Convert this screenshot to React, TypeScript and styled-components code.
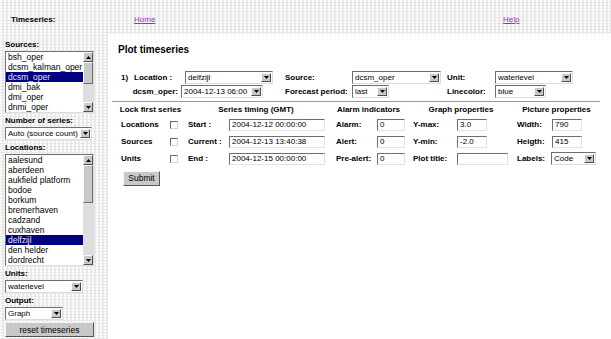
import React from 'react';
import styled, { createGlobalStyle } from 'styled-components';

const GlobalStyle = createGlobalStyle`
  html, body {
    margin: 0;
    padding: 0;
  }
  body {
    width: 611px;
    height: 339px;
    overflow: hidden;
    background-color: #e9e9e9;
    background-image: radial-gradient(circle at 1px 1px, #ffffff 0.7px, transparent 1px);
    background-size: 4px 3px;
    font-family: "Liberation Sans", Arial, sans-serif;
    color: #000;
  }
`;

const Page = styled.div`
  display: grid;
  grid-template-columns: 108px 503px;
  grid-template-rows: 34px 305px;
`;

const Header = styled.div`
  grid-column: 1 / -1;
  display: grid;
  grid-template-columns: 134px 369px auto;
  align-items: center;
  padding-top: 4px;
  font-size: 8px;
`;

const AppTitle = styled.div`
  padding-left: 11px;
  font-weight: bold;
`;

const NavLink = styled.a`
  color: #9933cc;
  text-decoration: underline;
  width: fit-content;
`;

const Sidebar = styled.div`
  display: flex;
  flex-direction: column;
  align-items: flex-start;
  padding: 6px 0 0 5px;
`;

const SideLabel = styled.div`
  font-size: 8px;
  font-weight: bold;
  line-height: 10px;
  height: 10px;
  margin-bottom: 1px;
`;

const SideField = styled.div`
  margin-bottom: 3px;
`;

const ListBox = styled.div<{ $rows: number }>`
  box-sizing: border-box;
  display: flex;
  width: 89px;
  height: ${p => p.$rows * 10 + 2}px;
  background: #fff;
  border: 1px solid;
  border-color: #6e6e6e #dcdcdc #dcdcdc #6e6e6e;
`;

const ListItems = styled.div`
  flex: 1;
  min-width: 0;
`;

const ListItem = styled.div<{ $selected?: boolean }>`
  height: 10px;
  line-height: 10px;
  font-size: 8.5px;
  padding-left: 2px;
  white-space: nowrap;
  overflow: hidden;
  background: ${p => (p.$selected ? '#000080' : 'transparent')};
  color: ${p => (p.$selected ? '#e4e4f4' : '#000')};
`;

const Scrollbar = styled.div`
  width: 10px;
  display: flex;
  flex-direction: column;
  background: #dedede;
`;

const ScrollButton = styled.div`
  box-sizing: border-box;
  width: 10px;
  height: 10px;
  background: #c8c8c8;
  border: 1px solid;
  border-color: #fafafa #505050 #505050 #fafafa;
  display: flex;
  align-items: center;
  justify-content: center;
`;

const ScrollThumb = styled.div<{ $h: number }>`
  box-sizing: border-box;
  height: ${p => p.$h}px;
  background: #c8c8c8;
  border: 1px solid;
  border-color: #fafafa #707070 #707070 #fafafa;
`;

const ScrollSpace = styled.div`
  flex: 1;
`;

const SelectBox = styled.div<{ $w: number }>`
  box-sizing: border-box;
  width: ${p => p.$w}px;
  height: 13px;
  flex: none;
  display: flex;
  align-items: center;
  padding: 0 1px 0 2px;
  background: #fff;
  border: 1px solid;
  border-color: #6e6e6e #dcdcdc #dcdcdc #6e6e6e;
  font-size: 8px;
  font-weight: normal;
`;

const SelectText = styled.span`
  flex: 1;
  min-width: 0;
  white-space: nowrap;
  overflow: hidden;
  line-height: 11px;
`;

const ArrowButton = styled.span`
  box-sizing: border-box;
  width: 10px;
  height: 9px;
  flex: none;
  display: flex;
  align-items: center;
  justify-content: center;
  background: #c8c8c8;
  border: 1px solid;
  border-color: #fafafa #505050 #505050 #fafafa;
`;

const Main = styled.div`
  background: #fff;
  padding: 10px 0 0 9px;
`;

const PageTitle = styled.div`
  font-size: 10px;
  font-weight: bold;
  line-height: 12px;
  padding-left: 1px;
  margin-bottom: 14px;
`;

const SeriesRow = styled.div`
  display: flex;
  align-items: center;
  height: 14px;
`;

const Cell = styled.div<{ $w: number; $pl?: number; $right?: boolean }>`
  box-sizing: border-box;
  width: ${p => p.$w}px;
  flex: none;
  padding-left: ${p => p.$pl ?? 0}px;
  padding-right: ${p => (p.$right ? 3 : 0)}px;
  text-align: ${p => (p.$right ? 'right' : 'left')};
  font-size: 8px;
  font-weight: bold;
  white-space: nowrap;
`;

const Rule = styled.div`
  margin: 3px 0 0 -5px;
  width: 488px;
  border-top: 1px solid #9a9a9a;
`;

const PropsGrid = styled.div`
  display: grid;
  grid-template-columns: 51px 16px 44px 100px 48px 33px 47px 57px 38px 49px;
  grid-template-rows: 14px;
  grid-auto-rows: 17px;
  align-items: center;
  font-size: 8px;
`;

const GroupHead = styled.div`
  grid-column: span 2;
  text-align: center;
  font-weight: bold;
  white-space: nowrap;
`;

const PropLabel = styled.div<{ $pl?: number }>`
  padding-left: ${p => p.$pl ?? 4}px;
  font-weight: bold;
  white-space: nowrap;
`;

const TextField = styled.input.attrs({ readOnly: true, type: 'text' })<{ $w: number }>`
  box-sizing: border-box;
  width: ${p => p.$w}px;
  height: 12px;
  margin: 0 0 0 1px;
  padding: 0 0 0 2px;
  background: #fff;
  border: 1px solid;
  border-color: #6e6e6e #e2e2e2 #e2e2e2 #6e6e6e;
  font-family: "Liberation Sans", Arial, sans-serif;
  font-size: 8px;
  line-height: 10px;
  color: #000;
  outline: none;
`;

const CheckBox = styled.span`
  box-sizing: border-box;
  display: block;
  width: 8px;
  height: 8px;
  margin-left: 2px;
  background: #fff;
  border: 1px solid;
  border-color: #6a6a6a #d4d4d4 #d4d4d4 #6a6a6a;
`;

const GrayButton = styled.button<{ $w: number }>`
  box-sizing: border-box;
  width: ${p => p.$w}px;
  height: 15px;
  padding: 0;
  background: #c8c8c8;
  border: 1px solid;
  border-color: #f6f6f6 #555 #555 #f6f6f6;
  font-family: "Liberation Sans", Arial, sans-serif;
  font-size: 8.5px;
  color: #000;
`;

const SubmitButton = styled(GrayButton)`
  margin: 2px 0 0 6px;
`;

const ResetButton = styled(GrayButton)`
  margin-top: 2px;
`;

const DownTriangle = () => (
  <svg width="5" height="3" viewBox="0 0 5 3">
    <path d="M0 0h5L2.5 3z" fill="#000" />
  </svg>
);

const UpTriangle = () => (
  <svg width="5" height="3" viewBox="0 0 5 3">
    <path d="M0 3h5L2.5 0z" fill="#000" />
  </svg>
);

const Select = ({ w, value }: { w: number; value: string }) => (
  <SelectBox $w={w}>
    <SelectText>{value}</SelectText>
    <ArrowButton>
      <DownTriangle />
    </ArrowButton>
  </SelectBox>
);

const List = ({ items, selected, thumb }: { items: string[]; selected: string; thumb: number }) => (
  <ListBox $rows={items.length}>
    <ListItems>
      {items.map(item => (
        <ListItem key={item} $selected={item === selected}>
          {item}
        </ListItem>
      ))}
    </ListItems>
    <Scrollbar>
      <ScrollButton>
        <UpTriangle />
      </ScrollButton>
      <ScrollThumb $h={thumb} />
      <ScrollSpace />
      <ScrollButton>
        <DownTriangle />
      </ScrollButton>
    </Scrollbar>
  </ListBox>
);

const sources = ['bsh_oper', 'dcsm_kalman_oper', 'dcsm_oper', 'dmi_bak', 'dmi_oper', 'dnmi_oper'];

const locations = [
  'aalesund',
  'aberdeen',
  'aukfield platform',
  'bodoe',
  'borkum',
  'bremerhaven',
  'cadzand',
  'cuxhaven',
  'delfzijl',
  'den helder',
  'dordrecht',
];

const App: React.FC = () => {
  return (
    <>
      <GlobalStyle />
      <Page>
        <Header>
          <AppTitle>Timeseries:</AppTitle>
          <NavLink href="#">Home</NavLink>
          <NavLink href="#">Help</NavLink>
        </Header>

        <Sidebar>
          <SideLabel>Sources:</SideLabel>
          <SideField>
            <List items={sources} selected="dcsm_oper" thumb={22} />
          </SideField>
          <SideLabel>Number of series:</SideLabel>
          <SideField>
            <Select w={87} value="Auto (source count)" />
          </SideField>
          <SideLabel>Locations:</SideLabel>
          <SideField>
            <List items={locations} selected="delfzijl" thumb={38} />
          </SideField>
          <SideLabel>Units:</SideLabel>
          <SideField>
            <Select w={78} value="waterlevel" />
          </SideField>
          <SideLabel>Output:</SideLabel>
          <Select w={58} value="Graph" />
          <ResetButton $w={89}>reset timeseries</ResetButton>
        </Sidebar>

        <Main>
          <PageTitle>Plot timeseries</PageTitle>

          <SeriesRow>
            <Cell $w={17} $pl={4}>1)</Cell>
            <Cell $w={51}>Location :</Cell>
            <Select w={88} value="delfzijl" />
            <Cell $w={79} $pl={12}>Source:</Cell>
            <Select w={89} value="dcsm_oper" />
            <Cell $w={54} $pl={6}>Unit:</Cell>
            <Select w={78} value="waterlevel" />
          </SeriesRow>
          <SeriesRow>
            <Cell $w={64} $right>dcsm_oper:</Cell>
            <Select w={82} value="2004-12-13 06:00" />
            <Cell $w={89} $pl={22}>Forecast period:</Cell>
            <Select w={37} value="last" />
            <Cell $w={106} $pl={58}>Linecolor:</Cell>
            <Select w={51} value="blue" />
          </SeriesRow>

          <Rule />

          <PropsGrid>
            <GroupHead>Lock first series</GroupHead>
            <GroupHead>Series timing (GMT)</GroupHead>
            <GroupHead>Alarm indicators</GroupHead>
            <GroupHead>Graph properties</GroupHead>
            <GroupHead>Picture properties</GroupHead>

            <PropLabel>Locations</PropLabel>
            <CheckBox />
            <PropLabel>Start :</PropLabel>
            <TextField $w={96} value="2004-12-12 00:00:00" />
            <PropLabel $pl={8}>Alarm:</PropLabel>
            <TextField $w={28} value="0" />
            <PropLabel>Y-max:</PropLabel>
            <TextField $w={30} value="3.0" />
            <PropLabel>Width:</PropLabel>
            <TextField $w={30} value="790" />

            <PropLabel>Sources</PropLabel>
            <CheckBox />
            <PropLabel>Current :</PropLabel>
            <TextField $w={96} value="2004-12-13 13:40:38" />
            <PropLabel $pl={8}>Alert:</PropLabel>
            <TextField $w={28} value="0" />
            <PropLabel>Y-min:</PropLabel>
            <TextField $w={30} value="-2.0" />
            <PropLabel>Heigth:</PropLabel>
            <TextField $w={30} value="415" />

            <PropLabel>Units</PropLabel>
            <CheckBox />
            <PropLabel>End :</PropLabel>
            <TextField $w={96} value="2004-12-15 00:00:00" />
            <PropLabel $pl={8}>Pre-alert:</PropLabel>
            <TextField $w={28} value="0" />
            <PropLabel>Plot title:</PropLabel>
            <TextField $w={51} value="" />
            <PropLabel>Labels:</PropLabel>
            <Select w={45} value="Code" />
          </PropsGrid>

          <SubmitButton $w={37}>Submit</SubmitButton>
        </Main>
      </Page>
    </>
  );
};

export default App;
